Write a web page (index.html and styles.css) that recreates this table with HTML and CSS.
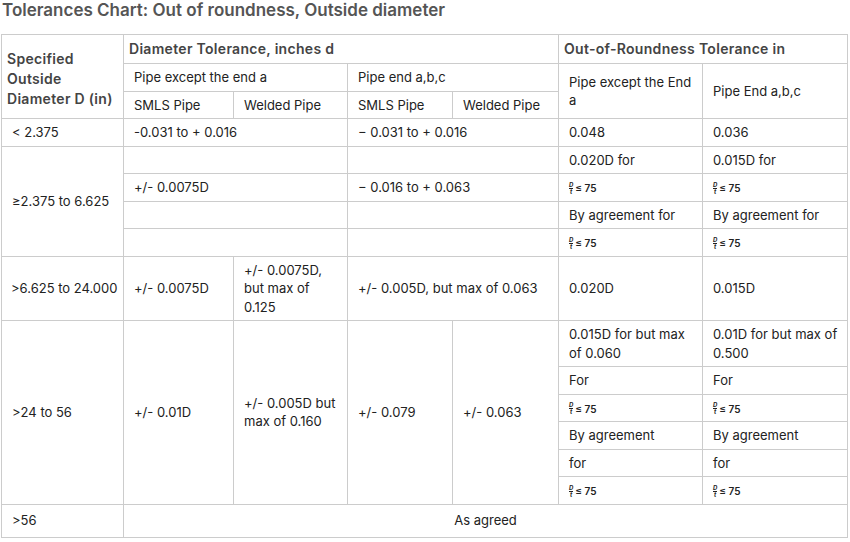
FILE: index.html
```html
<!DOCTYPE html>
<html>
<head>
<meta charset="utf-8">
<link rel="stylesheet" href="styles.css">
</head>
<body>
<h2 class="title">Tolerances Chart: Out of roundness, Outside diameter</h2>
<table class="chart">
  <colgroup>
    <col class="c1"><col class="c2"><col class="c3"><col class="c4"><col class="c5"><col class="c6"><col class="c7">
  </colgroup>
  <tr>
    <th rowspan="3" class="spec">Specified Outside Diameter D (in)</th>
    <th colspan="4">Diameter Tolerance, inches d</th>
    <th colspan="2">Out-of-Roundness Tolerance in</th>
  </tr>
  <tr>
    <td colspan="2">Pipe except the end a</td>
    <td colspan="2">Pipe end a,b,c</td>
    <td rowspan="2">Pipe except the End a</td>
    <td rowspan="2">Pipe End a,b,c</td>
  </tr>
  <tr>
    <td>SMLS Pipe</td>
    <td>Welded Pipe</td>
    <td>SMLS Pipe</td>
    <td>Welded Pipe</td>
  </tr>
  <tr>
    <td>&lt; 2.375</td>
    <td colspan="2">-0.031 to + 0.016</td>
    <td colspan="2">&minus; 0.031 to + 0.016</td>
    <td>0.048</td>
    <td>0.036</td>
  </tr>
  <tr>
    <td rowspan="4">&ge;2.375 to 6.625</td>
    <td colspan="2"></td>
    <td colspan="2"></td>
    <td>0.020D for</td>
    <td>0.015D for</td>
  </tr>
  <tr>
    <td colspan="2">+/- 0.0075D</td>
    <td colspan="2">&minus; 0.016 to + 0.063</td>
    <td><span class="frac"><span class="ft"><span>D</span><span class="fb">t</span></span><span class="le">&le; 75</span></span></td>
    <td><span class="frac"><span class="ft"><span>D</span><span class="fb">t</span></span><span class="le">&le; 75</span></span></td>
  </tr>
  <tr>
    <td colspan="2"></td>
    <td colspan="2"></td>
    <td>By agreement for</td>
    <td>By agreement for</td>
  </tr>
  <tr>
    <td colspan="2"></td>
    <td colspan="2"></td>
    <td><span class="frac"><span class="ft"><span>D</span><span class="fb">t</span></span><span class="le">&le; 75</span></span></td>
    <td><span class="frac"><span class="ft"><span>D</span><span class="fb">t</span></span><span class="le">&le; 75</span></span></td>
  </tr>
  <tr>
    <td class="nowrap">&gt;6.625 to 24.000</td>
    <td>+/- 0.0075D</td>
    <td>+/- 0.0075D, but max of 0.125</td>
    <td colspan="2">+/- 0.005D, but max of 0.063</td>
    <td>0.020D</td>
    <td>0.015D</td>
  </tr>
  <tr>
    <td rowspan="6">&gt;24 to 56</td>
    <td rowspan="6">+/- 0.01D</td>
    <td rowspan="6">+/- 0.005D but max of 0.160</td>
    <td rowspan="6">+/- 0.079</td>
    <td rowspan="6">+/- 0.063</td>
    <td>0.015D for but max of 0.060</td>
    <td class="tight">0.01D for but max of 0.500</td>
  </tr>
  <tr>
    <td>For</td>
    <td>For</td>
  </tr>
  <tr>
    <td><span class="frac"><span class="ft"><span>D</span><span class="fb">t</span></span><span class="le">&le; 75</span></span></td>
    <td><span class="frac"><span class="ft"><span>D</span><span class="fb">t</span></span><span class="le">&le; 75</span></span></td>
  </tr>
  <tr>
    <td>By agreement</td>
    <td>By agreement</td>
  </tr>
  <tr>
    <td>for</td>
    <td>for</td>
  </tr>
  <tr>
    <td><span class="frac"><span class="ft"><span>D</span><span class="fb">t</span></span><span class="le">&le; 75</span></span></td>
    <td><span class="frac"><span class="ft"><span>D</span><span class="fb">t</span></span><span class="le">&le; 75</span></span></td>
  </tr>
  <tr>
    <td class="last">&gt;56</td>
    <td colspan="6" class="center">As agreed</td>
  </tr>
</table>
</body>
</html>
```

FILE: styles.css
```css
html, body {
  margin: 0;
  padding: 0;
  background: #ffffff;
}

body {
  font-family: "Inter", "Open Sans", "DejaVu Sans", sans-serif;
  color: #222222;
}

.title {
  margin: 0 0 14px 2px;
  font-size: 17px;
  line-height: 20px;
  font-weight: 600;
  color: #555555;
}

.chart {
  margin-left: 1px;
  width: 847px;
  border-collapse: collapse;
  table-layout: fixed;
  font-size: 13px;
}

.c1 { width: 122px; }
.c2 { width: 110px; }
.c3 { width: 114px; }
.c4 { width: 105px; }
.c5 { width: 106px; }
.c6 { width: 144px; }
.c7 { width: 145px; }

.chart th,
.chart td {
  border: 1px solid #cccccc;
  vertical-align: middle;
  text-align: left;
}

.chart th {
  padding: 4px 5px;
  font-size: 14px;
  letter-spacing: 0.3px;
  line-height: 20px;
  font-weight: 600;
  color: #444444;
}

.chart th.spec {
  padding-top: 8px;
}

.chart td {
  padding: 4px 10px;
  line-height: 18.5px;
}

.chart td.nowrap {
  white-space: nowrap;
  padding-left: 9px;
  padding-right: 4px;
}

.chart td.tight {
  padding-right: 4px;
}

.chart td.center {
  text-align: center;
}

.chart td.last {
  height: 24px;
}

.frac {
  display: inline-flex;
  align-items: center;
  gap: 2px;
  vertical-align: middle;
}

.ft {
  display: inline-flex;
  flex-direction: column;
  align-items: center;
  font-size: 6px;
  line-height: 6px;
  font-style: italic;
  font-weight: 700;
}

.fb {
  border-top: 1px solid #222222;
  padding: 0 1px;
}

.le {
  font-size: 10px;
  line-height: 12px;
  font-weight: 600;
}
```
